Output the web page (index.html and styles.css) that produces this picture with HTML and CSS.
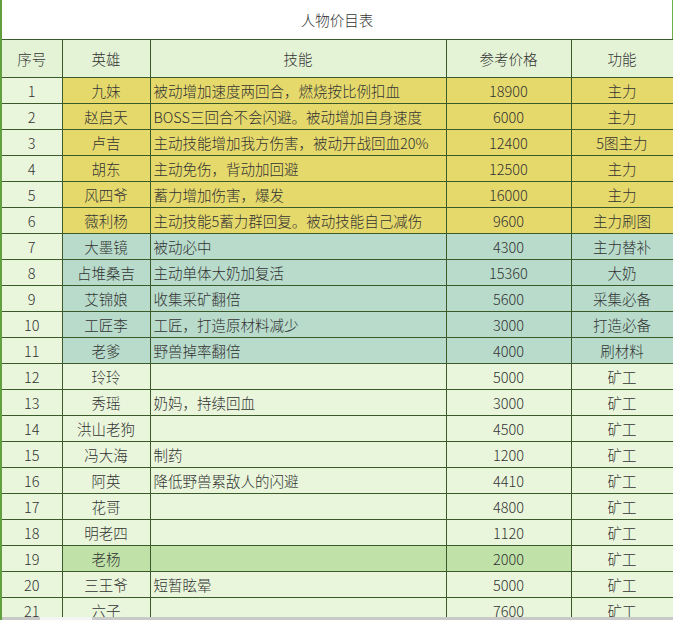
FILE: index.html
```html
<!DOCTYPE html>
<html lang="zh">
<head>
<meta charset="utf-8">
<title>人物价目表</title>
<link rel="stylesheet" href="styles.css">
</head>
<body>
<div class="sheet">
  <div class="title">人物价目表</div>
  <table class="grid">
    <colgroup>
      <col class="c-no"><col class="c-name"><col class="c-skill"><col class="c-price"><col class="c-role">
    </colgroup>
    <thead>
      <tr><th>序号</th><th>英雄</th><th>技能</th><th>参考价格</th><th>功能</th></tr>
    </thead>
    <tbody>
      <tr class="y"><td>1</td><td>九妹</td><td class="sk">被动增加速度两回合，燃烧按比例扣血</td><td>18900</td><td>主力</td></tr>
      <tr class="y"><td>2</td><td>赵启天</td><td class="sk">BOSS三回合不会闪避。被动增加自身速度</td><td>6000</td><td>主力</td></tr>
      <tr class="y"><td>3</td><td>卢吉</td><td class="sk">主动技能增加我方伤害，被动开战回血20%</td><td>12400</td><td>5图主力</td></tr>
      <tr class="y"><td>4</td><td>胡东</td><td class="sk">主动免伤，背动加回避</td><td>12500</td><td>主力</td></tr>
      <tr class="y"><td>5</td><td>风四爷</td><td class="sk">蓄力增加伤害，爆发</td><td>16000</td><td>主力</td></tr>
      <tr class="y"><td>6</td><td>薇利杨</td><td class="sk">主动技能5蓄力群回复。被动技能自己减伤</td><td>9600</td><td>主力刷图</td></tr>
      <tr class="t"><td>7</td><td>大墨镜</td><td class="sk">被动必中</td><td>4300</td><td>主力替补</td></tr>
      <tr class="t"><td>8</td><td>占堆桑吉</td><td class="sk">主动单体大奶加复活</td><td>15360</td><td>大奶</td></tr>
      <tr class="t"><td>9</td><td>艾锦娘</td><td class="sk">收集采矿翻倍</td><td>5600</td><td>采集必备</td></tr>
      <tr class="t"><td>10</td><td>工匠李</td><td class="sk">工匠，打造原材料减少</td><td>3000</td><td>打造必备</td></tr>
      <tr class="t"><td>11</td><td>老爹</td><td class="sk">野兽掉率翻倍</td><td>4000</td><td>刷材料</td></tr>
      <tr><td>12</td><td>玲玲</td><td class="sk"></td><td>5000</td><td>矿工</td></tr>
      <tr><td>13</td><td>秀瑶</td><td class="sk">奶妈，持续回血</td><td>3000</td><td>矿工</td></tr>
      <tr><td>14</td><td>洪山老狗</td><td class="sk"></td><td>4500</td><td>矿工</td></tr>
      <tr><td>15</td><td>冯大海</td><td class="sk">制药</td><td>1200</td><td>矿工</td></tr>
      <tr><td>16</td><td>阿英</td><td class="sk">降低野兽累敌人的闪避</td><td>4410</td><td>矿工</td></tr>
      <tr><td>17</td><td>花哥</td><td class="sk"></td><td>4800</td><td>矿工</td></tr>
      <tr><td>18</td><td>明老四</td><td class="sk"></td><td>1120</td><td>矿工</td></tr>
      <tr class="g"><td>19</td><td>老杨</td><td class="sk"></td><td>2000</td><td>矿工</td></tr>
      <tr><td>20</td><td>三王爷</td><td class="sk">短暂眩晕</td><td>5000</td><td>矿工</td></tr>
      <tr><td>21</td><td>六子</td><td class="sk"></td><td>7600</td><td>矿工</td></tr>
    </tbody>
  </table>
  <div class="hscroll"><span class="thumb"></span></div>
</div>
</body>
</html>
```

FILE: styles.css
```css
html, body {
  margin: 0;
  padding: 0;
  background: #ffffff;
}

.sheet {
  position: relative;
  width: 671px;
  height: 620px;
  overflow: hidden;
  border-left: 2px solid #62a03f;
  font-family: "Noto Sans CJK SC", "Noto Sans", sans-serif;
  font-weight: 300;
  font-size: 14.5px;
  color: #333333;
}

.title {
  height: 39px;
  line-height: 40px;
  text-align: center;
  background: #ffffff;
  border-right: 1px solid #6aae4a;
  box-sizing: border-box;
  width: 671px;
}

.grid {
  border-collapse: collapse;
  table-layout: fixed;
  width: 671px;
}

.c-no { width: 60px; }
.c-name { width: 88px; }
.c-skill { width: 296px; }
.c-price { width: 125px; }
.c-role { width: 102px; }

.grid th,
.grid td {
  border: 1px solid #3b5a29;
  padding: 0;
  text-align: center;
  font-weight: 300;
  white-space: nowrap;
  overflow: hidden;
  background: #e9f6dc;
}

.grid th {
  height: 37px;
  background: #e4f3d6;
}

.grid td {
  height: 25px;
  line-height: 25px;
}

.grid tr > :first-child {
  border-left: none;
}

.grid tr > :last-child {
  border-right: 1px solid #6aae4a;
}

.grid thead th {
  border-top: 1px solid #3b5a29;
}

.grid td.sk {
  text-align: left;
  padding-left: 3px;
}

.grid tr.y td:not(:first-child) { background: #e5d96c; }
.grid tr.t td:not(:first-child) { background: #b8dbcb; }
.grid tr.g td:nth-child(2),
.grid tr.g td:nth-child(3),
.grid tr.g td:nth-child(4) { background: #c0e2a8; }

.hscroll {
  position: absolute;
  left: 0;
  right: 0;
  bottom: 0;
  height: 3px;
  background: #c9c9c7;
}

.hscroll .thumb {
  position: absolute;
  left: 38px;
  top: 0;
  width: 52px;
  height: 3px;
  background: #f4f4f4;
}
```
